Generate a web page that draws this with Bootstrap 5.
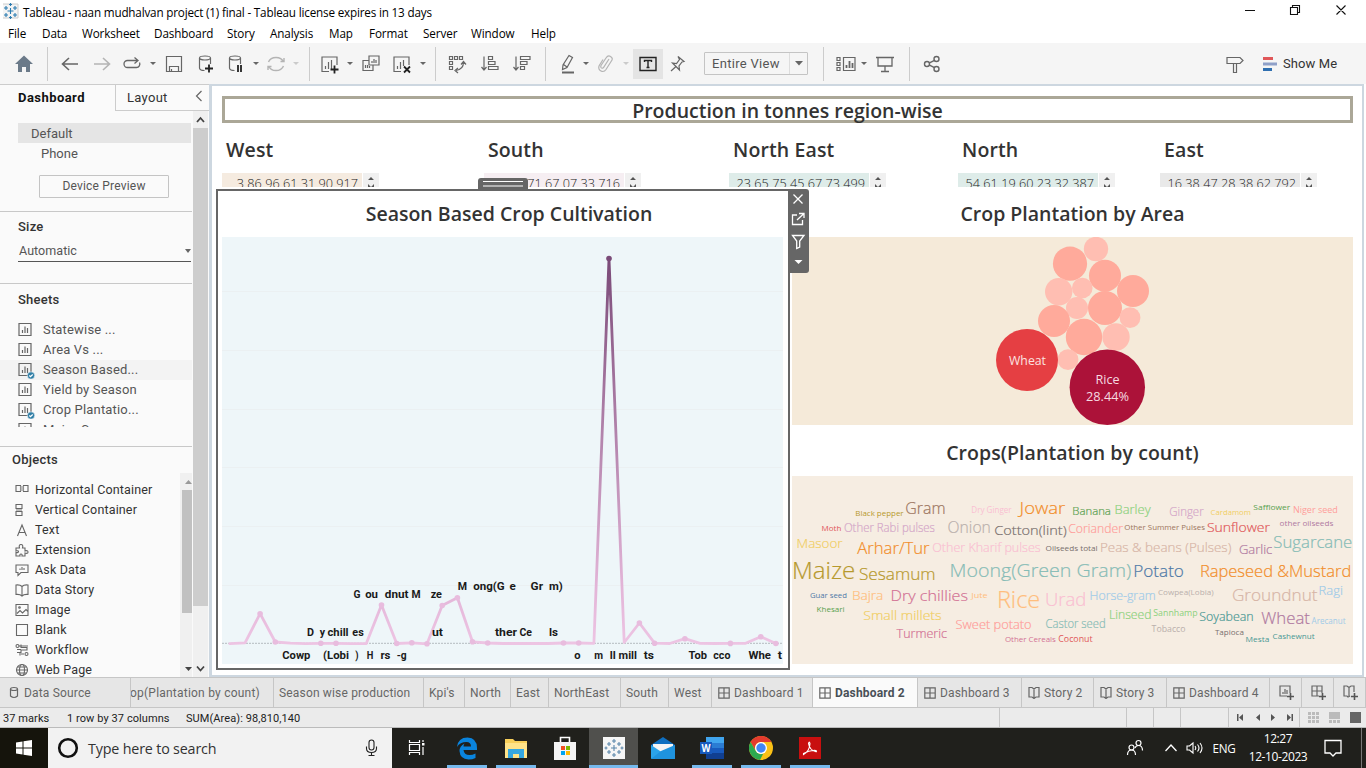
<!DOCTYPE html>
<html lang="en">
<head>
<meta charset="utf-8">
<title>Tableau - naan mudhalvan project (1) final</title>
<link href="https://cdn.jsdelivr.net/npm/bootstrap@5.3.0/dist/css/bootstrap.min.css" rel="stylesheet">
<style>
body{width:1366px;height:768px;overflow:hidden;font:13px/20px Roboto,sans-serif;color:#333;background:#fff}
svg{display:block;flex:none}
.win{font-family:"Open Sans",sans-serif;color:#000}
.titlebar{height:24px;font-size:11.7px;line-height:24px}
.titlebar .cap{letter-spacing:-.18px}
.menubar{height:19px;font-size:11.7px;line-height:18px;padding-left:8px;display:grid;grid-template-columns:34px 40px 72px 73px 43px 59px 40px 54px 48px 60px 1fr;letter-spacing:-.1px}
.toolrow{height:41px;background:#f5f5f5;padding-left:14px;display:grid;align-items:center;color:#666;
grid-template-columns:33px 13px 32px 30px 27px 15px 32px 30px 26px 14px 26px 17px 11px 26px 15px 31px 27px 16px 12px 33px 32px 33px 12px 24px 14px 27px 11px 34px 37px 119px 13px 24px 15px 34px 13px 303px 37px 1fr}
.toolrow i{width:1px;height:34px;background:#ccc}
.toolrow b{justify-self:start;margin-left:1px;width:0;border:3px solid transparent;border-top:3px solid #666;border-bottom:0}
.toolrow b.off{border-top-color:#999}
.toolrow svg,.ic{fill:none;stroke:#666;stroke-width:1.2}
.off{opacity:.45}
.tbtn{width:30px;height:30px;background:#e4e4e4}
.fitbox{width:104px;height:23px;border:1px solid #c4c4c4;border-radius:1px;font-size:13px;line-height:21px;color:#555;padding-left:7px;letter-spacing:.3px}
.fitbox span:last-child{width:18px;border-left:1px solid #ddd}
.car{width:0;height:0;border:3.5px solid transparent;border-top:4px solid #666;border-bottom:0}
.work{height:593px}
.side{width:210px;background:#fafafa;border-top:1px solid #ccc}
.side .tabL{width:115px;font-weight:700;color:#111;padding:3px 0 0 18px;height:26px;font-size:13px;letter-spacing:.45px}
.side .tabR{width:94px;border-left:1px solid #ccc;border-bottom:1px solid #ccc;height:26px;padding:3px 6px 0 11px;letter-spacing:.3px}
.sidecol{width:192px}
.dflt{margin:12px 1px 0 18px;height:20px;line-height:22px;background:#e5e5e5;padding-left:13px;color:#555}
.phone{padding-left:41px;height:20px;line-height:22px;color:#555}
.devbtn{margin:12px 0 0 39px;width:130px;height:23px;border:1px solid #c4c4c4;border-radius:1px;text-align:center;font-size:12px;line-height:21px;color:#555;letter-spacing:.2px}
.hl{height:1px;background:#c8c8c8}
.sidehd{padding-left:18px;font-weight:500;height:20px;line-height:21px;font-size:13px;letter-spacing:.25px}
.auto{margin:4px 1px 0 18px;height:21px;border-bottom:1px solid #555;color:#555;padding-left:1px;font-size:12.5px;letter-spacing:.05px}
.sheets{height:108px;overflow:hidden;margin-top:10px;padding-top:1px;color:#555}
.sheets div{height:20px;padding-left:18px;letter-spacing:.18px}
.objs{height:204px;overflow:hidden;width:180px;font-size:12.5px;padding-top:7px}
.objs div{height:20px;padding-left:15px;letter-spacing:.15px}
.objs svg{margin-right:6px}
.sb1{width:12px;background:#f0f0f0;height:204px;padding-left:2px}
.sb2{width:15px;background:#f0f0f0;margin-left:1px;height:566px}
.canvasbox{width:1155px;height:593px;border:2px solid #cdd7e0;border-left-width:3px;background:#fff;padding:10px 0 0 10px;margin-left:-1px}
.hd{font:600 19.5px/24px "Open Sans",sans-serif;color:#333}
.banner{height:27px;border:3px solid #aba797;text-align:center;line-height:24px;width:1131px}
.regions{height:66px;display:grid;grid-template-columns:262px 245px 229px 202px 1fr;width:1131px}
.regions .hd{padding:15px 0 0 4px;height:50px;letter-spacing:.12px}
.kpi{width:140px;height:14px;overflow:hidden;text-align:right;padding-right:4px;font:300 12.7px/20px "Open Sans",sans-serif;color:#222}
.spin{width:16px;height:14px;background:#f0f0f0;margin-left:1px;overflow:hidden}
.picked{flex:none;width:574px;height:481px;border:2px solid #666;margin-left:-6px;padding:0 4px;position:relative}
.grip{position:absolute;left:260px;top:-13px;width:50px;height:12px;background:#666;border-radius:3px 3px 0 0}
.sidebtns{position:absolute;left:570px;top:-2px;width:21px;height:84px;background:#666;border-radius:0 3px 3px 0;z-index:3}
.rightcol{flex:none;width:561px;margin:2px 0 0 2px}
.sheethd{height:46px;padding-top:11px;text-align:center}
.tabsrow{height:31px;border-top:1px solid #c6c6c6;border-bottom:1px solid #c6c6c6;background:#e6e6e6;display:grid;font-size:12px;line-height:30px;color:#666;
grid-template-columns:131px 143px 150px 41px 46px 38px 72px 48px 43px 101px 105px 104px 72px 73px 103px 32px 32px 1fr;letter-spacing:.17px}
.tabsrow>div{border-right:1px solid #c6c6c6;overflow:hidden;white-space:nowrap;display:flex;align-items:center;padding-left:5px}
.tabsrow svg{margin:0 4px 0 1px}
.statusrow{height:20px;background:#ebebeb;border-bottom:1px solid #bbb;display:grid;font-size:11px;line-height:21px;color:#222;grid-template-columns:67px 119px 814px 127px 27px 27px 48px 71px 1fr;letter-spacing:.08px}
.statusrow .v{border-right:1px solid #c6c6c6}
.statusrow>*{height:19px}
.taskrow{height:40px;background:#20201c;display:grid;grid-template-columns:48px 344px 50px 49px 49px 49px 49px 49px 49px 49px 49px 309px 32px 26px 30px 83px 34px 1fr}
.taskrow>div{display:flex;align-items:center;justify-content:center;position:relative;color:#fff;font-size:12px}
.taskrow .run::after{content:"";position:absolute;bottom:0;left:5px;right:4px;height:3px;background:#76b9ed}
.taskrow .cur{background:#50504d}.taskrow .cur::after{left:0!important;right:0!important}
</style>
</head>
<body>
<header class="win">
 <div class="titlebar d-flex">
  <svg width="16" height="24" style="margin-left:3px" viewBox="0 0 16 24"><path d="M0 4h15v14H0" fill="#f4f4f4" stroke="#ccc"/><path d="M7.500 8v6M4.500 11h6M3 6v4M1 8h4M12 6v4M10 8h4M3 13v4M1 15h4M12 13v4M10 15h4M7.500 3v3M6 4.500h3M7.500 16v3M6 17.500h3" stroke="#2a7bb0" stroke-width="1.100"/></svg>
  <span class="cap ms-1">Tableau - naan mudhalvan project (1) final - Tableau license expires in 13 days</span>
  <svg class="ms-auto" width="122" height="24" viewBox="0 0 122 24" fill="none" stroke="#111" stroke-width="1.100"><path d="M1 10.500h10M46.500 7.500h7v7h-7zM48.500 7.500v-2h7v7h-2M92.500 5.500l9 9M101.500 5.500l-9 9"/></svg>
 </div>
 <nav class="menubar"><span>File</span><span>Data</span><span>Worksheet</span><span>Dashboard</span><span>Story</span><span>Analysis</span><span>Map</span><span>Format</span><span>Server</span><span>Window</span><span>Help</span></nav>
</header>
<div class="toolrow">
 <svg width="20" height="20"><path d="M10 1.500l9 8.500h-3v8h-4v-5h-4v5H4v-8H1z" fill="#6b7a89" stroke="none"/></svg><i></i>
 <svg width="20" height="20" style="stroke-width:1.600"><path d="M18 10H3M9 4l-6.500 6L9 16"/></svg>
 <svg width="20" height="20" class="off" style="stroke-width:1.600"><path d="M2 10h15M11 4l6.500 6-6.500 6"/></svg>
 <svg width="20" height="20" style="stroke-width:1.300"><path d="M15 6.500H5.500a3.500 3.500 0 0 0 0 7h9a3.500 3.500 0 0 0 3-5M12.500 3.500l3.500 3-3.500 3"/></svg><b></b>
 <svg width="20" height="20"><path d="M2.500 2.500h15v15h-15zM5.500 17.500v-5h9v5M7.500 17v-2"/></svg>
 <svg width="20" height="20"><ellipse cx="9" cy="4" rx="5.500" ry="2"/><path d="M3.500 4v10q0 2.500 5 2.500M14.500 4v6"/><path d="M9 14.500h8M13 10.500v8" stroke="#222" stroke-width="1.800"/></svg>
 <svg width="20" height="20"><ellipse cx="9" cy="4" rx="5.500" ry="2"/><path d="M3.500 4v10q0 2.500 5 2.500M14.500 4v6"/><path d="M12 11v7M15 11v7" stroke="#222" stroke-width="1.800"/></svg><b></b>
 <svg width="20" height="20" class="off" style="stroke-width:1.400"><path d="M2.500 8a8 7 0 0 1 15 0M17.500 12a8 7 0 0 1-15 0M14.500 7.500h3.500V4M5.500 12.500H2V16"/></svg><b class="off"></b><i></i>
 <svg width="20" height="20"><path d="M9 17.500H2V3h15v8M5.500 15v-3M8.500 15V8M11.500 15V6"/><path d="M10.500 15.500h8M14.500 11.500v8" stroke="#222" stroke-width="1.800"/></svg><b></b>
 <svg width="20" height="20"><path d="M8 2h10v9H8zM11 9V7M13 9V5M15 9V6M8 6.500H2v10h10v-5M4.500 14v-3M6.500 14v-3M8.500 14v-2"/></svg>
 <svg width="20" height="20"><path d="M9 17.500H2V3h15v8M5.500 15v-3M8.500 15V8M11.500 12V6"/><path d="M12 12.500l6 6M18 12.500l-6 6" stroke="#222" stroke-width="1.800"/></svg><b></b><i></i>
 <svg width="20" height="20"><path d="M2.500 2.500h3v3h-3zM7.500 2.500h3v3h-3zM12.500 2.500h3v3h-3zM2.500 7.500h3v3h-3zM2.500 12.500h3v3h-3zM16.500 8q0 7.500-7.500 8.500M11 14l-3 2.500 3 2.500M14 10.500l2.500-3 2.500 3"/></svg>
 <svg width="20" height="20"><path d="M4 2.500v13M1.500 13L4 16l2.500-3M8.500 2.500h4v3h-4zM8.500 7.500h6.500v3H8.500zM8.500 12.500H18v3H8.500z"/></svg>
 <svg width="20" height="20"><path d="M4 2.500v13M1.500 13L4 16l2.500-3M8.500 2.500H18v3H8.500zM8.500 7.500h6.500v3H8.500zM8.500 12.500h4v3h-4z"/></svg><i></i>
 <svg width="20" height="20"><path d="M12 1.500l3.500 2L10 13.500 5.500 15.500 6 11zM6.500 10.500l3.500 2.500"/><path d="M5 18.500h12" stroke-width="2"/></svg><b style="margin-left:2px"></b>
 <svg width="20" height="20" class="off"><path d="M14 5l-5.500 8.500q-1.500 1.500-2.500 0-.5-1 0-2L11 4q2-3 4.500-1.500T17 6l-6 9.500q-2 3-5 1.500t-2-5l4-6.500"/></svg><b class="off"></b>
 <div class="tbtn d-flex align-items-center justify-content-center"><svg width="18" height="16" style="stroke:#222;stroke-width:1.400"><path d="M1 1.500h16v13H1zM5.500 6V4.500h7V6M9 4.500v7M7.500 11.500h3"/></svg></div>
 <svg width="20" height="20"><path d="M11 2.500l6 5-2 .5-3 4 .5 4-7-7 4 .5 3-4zM9 12.500L4 17"/></svg>
 <div class="fitbox d-flex"><span class="flex-fill">Entire View</span><span class="d-flex align-items-center justify-content-center"><svg width="8" height="5"><path d="M0 0h8L4 4.500z" fill="#666" stroke="none"/></svg></span></div><i></i>
 <svg width="20" height="20"><path d="M7.500 3.500H19v13H7.500zM1 3.500h3v3H1zM1 8.500h3v3H1zM1 13.500h3v3H1z"/><path d="M10.500 14v-3M13.500 14V7M16.500 14V9" stroke-width="1.800"/></svg><b></b>
 <svg width="20" height="20"><path d="M1 3.500h18M3 3.500v8.500h14V3.500M10 12v5M6 17.500h8" stroke-width="1.300"/></svg><i></i>
 <svg width="20" height="20" style="stroke-width:1.400"><circle cx="5" cy="10" r="2.500"/><circle cx="14.500" cy="5" r="2.500"/><circle cx="14.500" cy="15" r="2.500"/><path d="M7.500 8.800l5-2.500M7.500 11.200l5 2.500"/></svg>
 <svg width="20" height="20"><path d="M2 3.500h13l3 3-3 3H2zM8.500 9.500v9h3v-9"/></svg>
 <div class="d-flex align-items-center"><svg width="16" height="18" style="stroke-width:3"><path d="M1 3.500h10" stroke="#e05759"/><path d="M1 9h14" stroke="#8fa0c8"/><path d="M1 14.500h9" stroke="#2f6fb0"/></svg><span style="color:#333;margin-left:5px;font-size:13px;letter-spacing:.1px">Show Me</span></div>
</div>
<main class="work d-flex">
 <aside class="side">
  <div class="d-flex"><div class="tabL">Dashboard</div><div class="tabR d-flex justify-content-between"><span>Layout</span><svg class="ic" width="8" height="12" style="margin-top:2px"><path d="M6.500 1l-5 5 5 5"/></svg></div></div>
  <div class="d-flex">
   <div class="sidecol">
    <div class="dflt">Default</div><div class="phone">Phone</div><div class="devbtn">Device Preview</div>
    <div class="hl" style="margin-top:13px"></div>
    <div class="sidehd" style="margin-top:4px">Size</div>
    <div class="auto d-flex justify-content-between align-items-center" style="margin-top:5px"><span>Automatic</span><span class="car"></span></div>
    <div class="hl" style="margin-top:21px"></div>
    <div class="sidehd" style="margin-top:5px">Sheets</div>
    <div class="sheets" id="sheets"></div>
    <div class="hl" style="margin-top:19px"></div>
    <div class="sidehd" style="padding-left:12px;margin-top:2px">Objects</div>
    <div class="d-flex" style="margin-top:4px">
     <div class="objs" id="objs"></div>
     <svg class="sb1" width="12" height="204"><path d="M3 11h7l-3.500-4z" fill="#999"/><path d="M0 17h10v123H0z" fill="#c1c1c1"/><path d="M3 194h7l-3.500 4z" fill="#444"/></svg>
    </div>
   </div>
   <svg class="sb2" width="15" height="566"><path d="M0 17h15v478H0z" fill="#cdcdcd"/><path d="M4 11l3.500-4 3.500 4M4 555.500l3.500 4 3.500-4" fill="none" stroke="#444" stroke-width="1.800"/></svg>
  </div>
 </aside>
 <section class="canvasbox">
  <div class="banner hd">Production in tonnes region-wise</div>
  <div class="regions" id="regions"></div>
  <div class="d-flex">
   <div class="picked">
    <div class="grip"><svg width="50" height="12"><path d="M5 3.500h40M5 8h40" stroke="#fff" stroke-width="1.200"/></svg></div>
    <div class="sidebtns"><svg width="21" height="84" fill="none" stroke="#fff" stroke-width="1.300"><path d="M5.500 5.500l9 9M14.500 5.500l-9 9M9 26H4.500v9.500h10V31M9 31l7-6.500M11 24.500h5V29M4.500 46.500h11.500L11.700 52v6l-3 1.500V52z"/><path d="M6.500 71h8l-4 4z" fill="#fff" stroke="none"/></svg></div>
    <div class="sheethd hd" style="padding-left:12px">Season Based Crop Cultivation</div>
    <svg id="season" width="561" height="427" viewBox="222 237 561 427"></svg>
   </div>
   <div class="rightcol">
    <div class="sheethd hd">Crop Plantation by Area</div>
    <svg id="bubbles" width="561" height="188" viewBox="792 237 561 188"></svg>
    <div class="sheethd hd" style="height:51px;padding-top:16px;letter-spacing:.06px">Crops(Plantation by count)</div>
    <svg id="cloud" width="561" height="188" viewBox="792 476 561 188"></svg>
   </div>
  </div>
 </section>
</main>
<nav class="tabsrow" id="tabs"></nav>
<div class="statusrow"><span style="padding-left:3px">37 marks</span><span>1 row by 37 columns</span><span class="v">SUM(Area): 98,810,140</span><span class="v"></span><span class="v"></span><span class="v"></span><span class="v"></span>
 <span class="v"><svg width="70" height="19" fill="#555"><path d="M8 6h1.500v7H8zM14 6v7l-4-3.500zM31 6v7l-4-3.500zM42 6v7l4-3.500zM58 6v7l4-3.500zM62.500 6H64v7h-1.500z"/></svg></span>
 <svg width="66" height="19"><path d="M8 4h3v3H8zM12 4h3v3h-3zM16 4h3v3h-3zM8 8h3v3H8zM12 8h3v3h-3zM16 8h3v3h-3zM8 12h3v3H8zM12 12h3v3h-3zM16 12h3v3h-3zM29 4h11v7H29zM29 12h3v3h-3zM33 12h3v3h-3zM37 12h3v3h-3z" fill="#bbb"/><path d="M50 4h11v11H50z" fill="#666"/></svg></div>
<footer class="taskrow win">
 <div style="background:#15140c"><svg width="16" height="16" fill="#fff"><path d="M0 2.500L6.500 1.500v6H0zM7.500 1.300L16 0v7.500H7.500zM0 8.500h6.500v6L0 13.500zM7.500 8.500H16V16l-8.500-1.300z"/></svg></div>
 <div style="background:#f2f2f2;justify-content:flex-start!important"><svg width="22" height="22" style="margin-left:9px"><circle cx="11" cy="11" r="8.800" fill="none" stroke="#111" stroke-width="2.600"/></svg><span style="color:#333;font-size:14.300px;margin-left:9px;letter-spacing:-.17px;padding-top:1px">Type here to search</span><svg class="ms-auto" style="margin-right:14px" width="13" height="18" fill="none" stroke="#222" stroke-width="1.100"><rect x="4" y="1" width="5" height="10" rx="2.500"/><path d="M1.500 7.500v2q0 4 5 4t5-4v-2M6.500 13.500v3M3.500 16.500h6"/></svg></div>
 <div><svg width="18" height="18" fill="none" stroke="#fff" stroke-width="1.200"><path d="M1.500 1v2.500h10V1M1.500 5.500h10v6h-10zM1.500 16v-2.500h10V16M15 1v2M15 8v8"/><path d="M14 4h2.500v2.500H14z" fill="#fff" stroke="none"/></svg></div>
 <div class="run"><svg width="22" height="24"><path d="M1 11Q2 1.500 11.500 1.500 21 2 21 12v2H7.500q.5 5 6 5 3 0 6-1.500v4.500q-3 1.500-7 1.500Q4 23 3.500 15q0-5 5-7.500-1 1.500-1 3h7.500q0-4.500-4.500-4.500Q4 6 1 11z" fill="#0a84dd"/></svg></div>
 <div class="run"><svg width="24" height="22"><path d="M1 2h8l2 2h12v17H1z" fill="#f8cf5a"/><path d="M1 6h22v15H1z" fill="#ffe389"/><path d="M4 12h16v9h-5v-4H9v4H4z" fill="#35a7e0"/></svg></div>
 <div><svg width="24" height="26"><path d="M7.500 7V2.500h9V7" fill="none" stroke="#fff" stroke-width="1.600"/><path d="M1 7h22v18H1z" fill="#f4f4f4"/><path d="M8 11h4v4H8z" fill="#f25022"/><path d="M13 11h4v4h-4z" fill="#7fba00"/><path d="M8 16h4v4H8z" fill="#00a4ef"/><path d="M13 16h4v4h-4z" fill="#ffb900"/></svg></div>
 <div class="run cur"><svg width="22" height="22"><path d="M0 0h22v22H0z" fill="#f6f6f6"/><path d="M11 8v6M8 11h6M6 5v4M4 7h4M16 5v4M14 7h4M6 13v4M4 15h4M16 13v4M14 15h4M11 2v4M9 4h4M11 16v4M9 18h4M3 9.500v3M1.500 11h3M19 9.500v3M17.500 11h3" stroke="#5b87ab" stroke-width="1.100"/></svg></div>
 <div><svg width="24" height="22"><path d="M0 8l12-8 12 8v13H0z" fill="#0f6fc0"/><path d="M2 7h20v8l-10 5-10-5z" fill="#f5f5f5"/><path d="M0 8l12 8-12 6z" fill="#2aa3ea"/><path d="M24 8v14H0l10-8z" fill="#1f93de"/></svg></div>
 <div class="run"><svg width="24" height="22"><path d="M6 0h18v6H6z" fill="#41a5ee"/><path d="M6 6h18v5H6z" fill="#2b7cd3"/><path d="M6 11h18v5H6z" fill="#185abd"/><path d="M6 16h18v6H6z" fill="#103f91"/><path d="M0 5h12v12H0z" fill="#185abd"/><text x="1.500" y="15" font-family="Open Sans" font-weight="700" font-size="10" fill="#fff" textLength="9" lengthAdjust="spacingAndGlyphs">W</text></svg></div>
 <div class="run"><svg width="24" height="24"><circle cx="12" cy="12" r="12" fill="#fbc116"/><path d="M1.600 6A12 12 0 0 1 22.400 6H12a6 6 0 0 0-5.200 9z" fill="#e33b2e"/><path d="M1.600 6l5.200 9a6 6 0 0 0 7.500 2.500L11 24A12 12 0 0 1 1.600 6z" fill="#2da94f"/><circle cx="12" cy="12" r="6" fill="#fff"/><circle cx="12" cy="12" r="4.700" fill="#4286f5"/></svg></div>
 <div class="run"><svg width="22" height="22"><path d="M0 0h22v22H0z" fill="#c80f0f"/><path d="M4.500 17.500C8 15.500 10.800 11 11 6.500q-.7-3-1.500 0Q10.500 13 17 14.800q1.500-1.300-1.500-1.500-6 .2-11 3.200z" fill="none" stroke="#fff" stroke-width="1.100"/></svg></div>
 <div style="justify-content:flex-end!important"><svg width="18" height="18" fill="none" stroke="#fff" stroke-width="1.200" style="margin-right:-1px"><circle cx="12.500" cy="4" r="2.500"/><circle cx="5.500" cy="8.500" r="2.500"/><path d="M1.500 16q0-5 4-5t4 5M9 9q1-2.500 3.500-2.500 4 0 4 5"/></svg></div>
 <div style="justify-content:flex-end!important"><svg width="14" height="10" fill="none" stroke="#fff" stroke-width="1.300" style="margin-right:-3px"><path d="M1.500 8L7 2l5.500 6"/></svg></div>
 <div style="justify-content:flex-end!important"><svg width="18" height="14" fill="none" stroke="#fff" stroke-width="1.100" style="margin-right:-3px"><path d="M1 5h2.500L7 2v10L3.500 9H1zM9 5q1.500 2 0 4M11.500 3.500q3 3.500 0 7M14 2q4 5 0 10"/></svg></div>
 <div style="padding-left:16px"><span style="letter-spacing:-.3px;font-size:11.700px">ENG</span></div>
 <div class="lh-1" style="flex-direction:column;gap:6px;letter-spacing:-.4px;padding-left:11px;white-space:nowrap"><span>12:27</span><span>12-10-2023</span></div>
 <div style="padding-left:4px"><svg width="18" height="18" fill="none" stroke="#fff" stroke-width="1.300"><path d="M1 1.500h16V14h-5l-3 3-3-3H1z"/></svg></div>
 <div style="border-left:1px solid #777;margin-left:13px"></div>
</footer>
<script src="https://cdn.jsdelivr.net/npm/bootstrap@5.3.0/dist/js/bootstrap.bundle.min.js"></script>
<script>
const $=id=>document.getElementById(id);
const T=(x,y,w,size,fill,s,extra='')=>`<text x="${x}" y="${y}" font-size="${size}" fill="${fill}" textLength="${w}" lengthAdjust="spacingAndGlyphs" ${extra}>${s.replace('&','&amp;')}</text>`;

// sheet list
const bars='<path d="M1 .5h12v12H1zM4.500 10V7M7 10V3.500M9.500 10V5"/>';
$('sheets').innerHTML=[['Statewise ...'],['Area Vs ...'],['Season Based...',1],['Yield by Season'],['Crop Plantatio...',1],['Major Crops']].map(([n,c],i)=>
 `<div class="d-flex align-items-center"${i==2?' style="background:#f3f3f3"':''}><svg class="ic" width="17" height="17" viewBox="0 -1 17 17" style="margin-right:8px">${bars}${c?'<circle cx="13" cy="12.500" r="3.700" fill="#2f7ea6" stroke="#fafafa" stroke-width=".6"/><path d="M11.300 12.500l1.200 1.200 2.200-2.200" stroke="#fff"/>':''}</svg>${n}</div>`).join('');

// dashboard objects
const objIcons={
'Horizontal Container':'<path d="M1 2.500h4.500v6H1zM8.500 2.500H13v6H8.500z"/><path d="M5.500 3h3v5h-3z" fill="#bbb" stroke="none"/>',
'Vertical Container':'<path d="M1 1.500h6v4H1zM1 8.500h6v4H1z"/><path d="M1 6h6v2H1z" fill="#bbb" stroke="none"/>',
'Text':'<path d="M2.500 13L7 2l4.500 11M4 9.500h6"/>',
'Extension':'<path d="M1 5h3.500q-1-3.500 1.500-3.500T7.500 5H10v3q3-1 3 1t-3 1v3H7q.500-2-1-2t-1 2H1V9.500q2.500.500 2.500-.800T1 8z"/>',
'Ask Data':'<path d="M1 2h12v7.500H6L3 12.500v-3H1zM5 7V5.500M7 7V4M9 7V5"/>',
'Data Story':'<path d="M7 3.500Q5 1.500 1 2v9.500q4-.500 6 1.500 2-2 6-1.500V2Q9 1.500 7 3.500zM7 3.500V13"/>',
'Image':'<path d="M1 1.500h12v11H1zM2 10.500l3-3 2.500 2.500L11 6.500l2 2"/><circle cx="4.500" cy="4.500" r=".8"/>',
'Blank':'<path d="M1.500 1.500h11v11h-11z"/>',
'Workflow':'<circle cx="2.500" cy="3" r="1.500"/><circle cx="11.500" cy="11" r="1.500"/><path d="M4 3h9M6 1.500v3h6V7H6v3M2 6.500h4M2 9.500h3v3M9 11H6"/>',
'Web Page':'<circle cx="7" cy="7" r="5.500"/><ellipse cx="7" cy="7" rx="2.500" ry="5.500"/><path d="M1.500 7h11M2.500 4h9M2.500 10h9"/>'};
$('objs').innerHTML=Object.entries(objIcons).map(([n,p])=>`<div class="d-flex align-items-center"><svg class="ic" width="14" height="14" style="stroke-width:1.100">${p}</svg>${n}</div>`).join('');

// regional totals
$('regions').innerHTML=[['West','3 86 96 61 31 90 917','#f5ebe0'],['South','12 71 67 07 33 716','#f6eef2'],['North East','23 65 75 45 67 73 499','#deece9'],['North','54 61 19 60 23 32 387','#deece9'],['East','16 38 47 28 38 62 792','#e9e9e9']].map(([n,v,c])=>
 `<div><div class="hd">${n}</div><div class="d-flex"><div class="kpi" style="background:${c}">${v}</div><div class="spin"><svg width="16" height="14"><path d="M5 7l3-3 3 3zM5 11l3 3 3-3v3H5z" fill="#555"/></svg></div></div></div>`).join('');

// season line
const B=643.3,ys=[643.7,642.8,613.7,642,643.2,643.6,643.3,643.3,643.6,643.6,605,643.5,642.8,643.8,605.5,597.7,641.8,643,643.5,643.5,643.5,643.5,643,643,643.3,258.5,642.5,623,643.2,643.5,638.7,643.3,643.5,643.4,643.3,636.7,643.5];
const px=i=>+(229.8+i*15.17).toFixed(1);
let s='<defs><linearGradient id="g" gradientUnits="userSpaceOnUse" x1="0" y1="643" x2="0" y2="258"><stop offset="0" stop-color="#edc4e3"/><stop offset=".15" stop-color="#e2b4d7"/><stop offset="1" stop-color="#7a4a78"/></linearGradient></defs><rect x="222" y="237" width="561" height="427" fill="#eef6f9"/>';
[291.500,350.500,409.500,467.500,526.500,585.500].forEach(y=>s+=`<path d="M222 ${y}h561" stroke="#ebf0f2"/>`);
s+=`<path d="M222 ${B}h561" stroke="#b5bcc0" stroke-dasharray="2 1"/><polyline fill="none" stroke="url(#g)" stroke-width="2.800" stroke-linejoin="round" stroke-linecap="round" points="${ys.map((y,i)=>px(i)+','+y).join(' ')}"/>`;
[2,3,6,7,10,11,12,13,14,15,16,17,22,23,25,27,28,30,33,35,36].forEach(i=>s+=`<circle cx="${px(i)}" cy="${ys[i]}" r="2.800" fill="${i==25?'#7a4a78':'#e8bcde'}"/>`);
s+='<g font-family="Roboto,sans-serif" font-weight="700">';
[[659,[['Cowp',282.3,310.4],['(Lobi',323,349],[')',355.2,358.5],['H',366.7,373.3],['rs',380.4,390.4],['-g',396.7,406.6],['o',574.2,580.5],['m',594.2,603],['ll',609.7,615.7],['mill',618.6,637],['ts',643.8,654],['Tob',688.5,707],['cco',713.3,730.4],['Whe',748.5,771],['t',777.7,782]]],
[636,[['D',307,314],['y',319.7,325],['chill',327.5,348.6],['es',352.3,363.7],['ut',432,443],['ther',495,517],['Ce',519.5,532],['ls',549,558]]],
[598,[['G',353.4,360.4],['ou',365.2,378],['dnut',384.8,408.5],['M',411.4,420.5],['ze',430.7,442]]],
[590,[['M',457.7,467],['ong(G',473.2,504.7],['e',509.5,515.8],['Gr',530.6,543],['m)',549,562.8]]]].forEach(([y,a])=>a.forEach(([t,x,x2])=>s+=T(x,y,(x2-x).toFixed(1),11,'#1a1a1a',t)));
$('season').innerHTML=s+'</g>';

// packed bubbles
s='<rect x="792" y="237" width="561" height="188" fill="#f5ead9"/>';
[[1070,263.7,17.1,1],[1096,249,12.2],[1105,275.7,16,1],[1133,291,16,1],[1058.7,291.7,13.7],[1082.3,288,10.3],[1077,308,11],[1105,308,17,1],[1130,317.7,10.4],[1054,321,16,1],[1084,337,18.2,1],[1116,337,13.7],[1068,359.7,10.4]].forEach(([x,y,r,d])=>s+=`<circle cx="${x}" cy="${y}" r="${r}" fill="${d?'#ffaa9b':'#ffbeb2'}"/>`);
s+='<circle cx="1027" cy="360" r="31" fill="#e53f43"/><circle cx="1107.300" cy="387.300" r="37.700" fill="#ac1239"/><g font-family="Open Sans,sans-serif">'+T(1009,365,37,12,'#fbe3e0','Wheat')+T(1095.5,384,24,12,'#f5dbe0','Rice')+T(1086,401,43,12,'#f5dbe0','28.44%')+'</g>';
$('bubbles').innerHTML=s;

// word cloud: text, x, right edge, baseline, size, colour
s='<rect x="792" y="476" width="561" height="188" fill="#f6ede2"/><g font-family="Open Sans,sans-serif">';
`Black pepper|855.7|904|515.7|8|#b6992d
Gram|905.7|946|514.3|16|#9d7660
Dry Ginger|971.7|1012|513|8.500|#fabfd2
Jowar|1020|1065.7|514.3|16|#f28e2b
Banana|1072.7|1111.3|515|11.500|#59a14f
Barley|1115|1151|514|12.500|#8cd17d
Ginger|1169.7|1204|516.3|12|#d4a6c8
Cardamom|1211|1251.3|515|8|#f1ce63
Safflower|1253.7|1290.7|510|8|#59a14f
Niger seed|1293.3|1338.3|513.3|9|#ff9d9a
Moth|822|841.7|531|8|#e15759
Other Rabi pulses|844.3|935.3|532.3|12|#d4a6c8
Onion|948|991.3|533|16|#bab0ac
Cotton(lint)|994.7|1067|535.3|13.500|#79706e
Coriander|1068.7|1123.3|533|12.500|#ff9d9a
Other Summer Pulses|1124.7|1205.3|530|8|#9d7660
Sunflower|1207.3|1270.3|532.3|13.500|#e15759
other oilseeds|1280|1333.7|525.7|8|#b07aa1
Masoor|797|843|548|13.500|#f1ce63
Arhar/Tur|857.7|930|554.3|16.500|#f28e2b
Other Kharif pulses|932.7|1041|552.3|12.500|#fabfd2
Oilseeds total|1046|1098|551|8|#79706e
Peas & beans (Pulses)|1100.3|1231.7|552.3|13|#d7b5a6
Garlic|1239.3|1272.7|554|12.500|#b07aa1
Sugarcane|1273.7|1352.7|548.3|16|#86bcb6
Maize|792.3|855.7|579|23|#b6992d
Sesamum|859.3|936|580|17|#b6992d
Moong(Green Gram)|950|1131.7|577.3|19|#86bcb6
Potato|1133.7|1184.3|577|16|#4e79a7
Rapeseed &Mustard|1200.3|1351.7|576.7|16|#f28e2b
Guar seed|810.3|847.3|598|8|#4e79a7
Bajra|852.3|883.7|600.3|12.500|#ffbe7d
Dry chillies|891|968.3|601|15|#d37295
Jute|971.7|988|598.3|8|#ffbe7d
Rice|997.3|1040.7|608|23|#ffbe7d
Urad|1045.3|1086.7|606|18|#fabfd2
Horse-gram|1090|1156|600.3|12|#a0cbe8
Cowpea(Lobia)|1158.3|1214|595|8|#bab0ac
Groundnut|1232.3|1318|601|16|#d7b5a6
Ragi|1319|1343.3|595|12.500|#a0cbe8
Khesari|817|845|612|8|#59a14f
Small millets|863.7|942|620|13|#f1ce63
Sweet potato|956|1032|629.3|12|#ff9d9a
Castor seed|1046|1106|628|12|#86bcb6
Linseed|1109.3|1152|619.3|12.500|#8cd17d
Sannhamp|1153.7|1198|615.7|8.500|#8cd17d
Soyabean|1199.7|1254|621.3|12|#499894
Wheat|1261.7|1310.3|624|16|#b07aa1
Arecanut|1312|1346|624|8.500|#a0cbe8
Tobacco|1152|1186|632|9|#bab0ac
Tapioca|1215.3|1244.3|635|8|#79706e
Mesta|1246|1269.7|642|8|#499894
Cashewnut|1273|1315|639|8|#499894
Turmeric|897|947.3|638|12.500|#d37295
Other Cereals|1005.3|1056.3|642|8|#d37295
Coconut|1058.7|1093|642|9|#e15759`.split('\n').forEach(l=>{const[t,x,x2,y,z,c]=l.split('|');s+=T(x-.4,y,(x2-x).toFixed(1),z,c,t,+z>9.5?`font-weight="300" stroke="${c}" stroke-width=".2"`:'')});
$('cloud').innerHTML=s+'</g>';

// workbook tabs
const gi='<svg class="ic" width="12" height="12"><path d="M.8 .8h10.400v10.400H.8zM6 1v10M1 6h10"/></svg>',si='<svg class="ic" width="12" height="13"><path d="M1 1.500h3l2 1.500 2-1.500h3V11H8l-2 1.500L4 11H1zM6 3v9"/></svg>',plus='<path d="M8 11.500h7M11.500 8v7" stroke="#555" stroke-width="1.600"/>';
$('tabs').innerHTML=['<svg class="ic" width="10" height="13" style="margin-left:4px;margin-right:5px"><ellipse cx="5" cy="3" rx="3.500" ry="1.500"/><path d="M1.500 3v7q3.500 3 7 0V3"/></svg>Data Source','<span style="margin-left:-6px;letter-spacing:.22px">op(Plantation by count)</span>','Season wise production',"Kpi's",'North','East','NorthEast','South','West',gi+'Dashboard 1',gi+'<b class="fw-bold text-dark-emphasis">Dashboard 2</b>',gi+'Dashboard 3',si+'Story 2',si+'Story 3',gi+'Dashboard 4',
`<svg class="ic" width="16" height="16" style="margin-left:4px"><path d="M8 11H1V1h10v7M4 9V7M6 9V4M8 9V5"/>${plus}</svg>`,`<svg class="ic" width="16" height="16" style="margin-left:4px"><path d="M8 11H1V1h10v7M6 1v10M1 6h10"/>${plus}</svg>`,`<svg class="ic" width="16" height="16" style="margin-left:4px"><path d="M7 11l-2 1-1-1H1V1h3l2 1.500L8 1h3v6M6 3v9"/>${plus}</svg>`].map((h,i)=>`<div${i==10?' style="background:#fafafa"':''}>${h}</div>`).join('');
</script>
</body>
</html>
